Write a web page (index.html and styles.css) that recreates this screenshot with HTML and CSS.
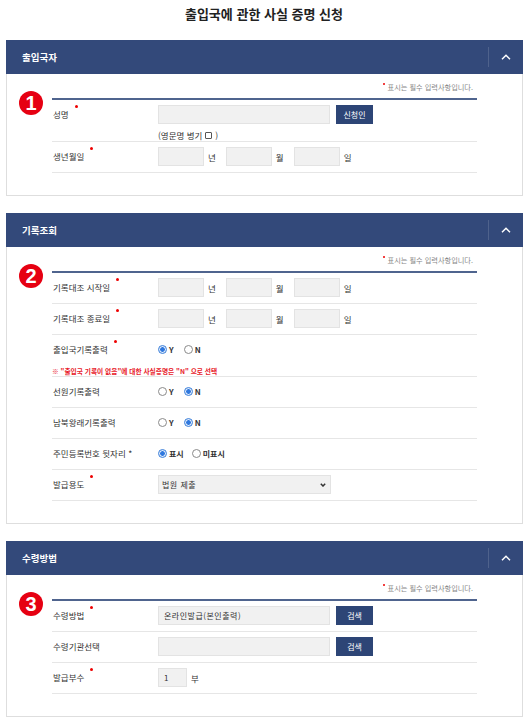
FILE: index.html
```html
<!DOCTYPE html>
<html lang="ko">
<head>
<meta charset="utf-8">
<title>출입국에 관한 사실 증명 신청</title>
<link rel="stylesheet" href="styles.css">
</head>
<body>
<h1 class="page-title">출입국에 관한 사실 증명 신청</h1>

<section class="panel">
  <header class="panel-head">
    <h2 class="panel-title">출입국자</h2>
    <span class="panel-toggle"><svg width="10" height="6" viewBox="0 0 10 6"><polyline points="1,5.3 5,1.2 9,5.3" fill="none" stroke="#fff" stroke-width="1.4"/></svg></span>
  </header>
  <div class="panel-body">
    <div class="step">1</div>
    <div class="panel-content">
      <p class="notice"><i class="dot"></i>표시는 필수 입력사항입니다.</p>
      <div class="form">
        <div class="row row-name">
          <div class="label">성명<i class="req"></i></div>
          <div class="field">
            <div class="line">
              <input class="box w-name" type="text">
              <button class="btn" type="button">신청인</button>
            </div>
            <div class="sub">(영문명 병기<span class="chk"></span>)</div>
          </div>
        </div>
        <div class="row">
          <div class="label">생년월일<i class="req"></i></div>
          <div class="field">
            <div class="line">
              <input class="box w-date" type="text"><span class="unit">년</span>
              <input class="box w-date" type="text"><span class="unit">월</span>
              <input class="box w-date" type="text"><span class="unit">일</span>
            </div>
          </div>
        </div>
      </div>
    </div>
  </div>
</section>

<section class="panel">
  <header class="panel-head">
    <h2 class="panel-title">기록조회</h2>
    <span class="panel-toggle"><svg width="10" height="6" viewBox="0 0 10 6"><polyline points="1,5.3 5,1.2 9,5.3" fill="none" stroke="#fff" stroke-width="1.4"/></svg></span>
  </header>
  <div class="panel-body">
    <div class="step">2</div>
    <div class="panel-content">
      <p class="notice"><i class="dot"></i>표시는 필수 입력사항입니다.</p>
      <div class="form">
        <div class="row">
          <div class="label">기록대조 시작일<i class="req"></i></div>
          <div class="field">
            <div class="line">
              <input class="box w-date" type="text"><span class="unit">년</span>
              <input class="box w-date" type="text"><span class="unit">월</span>
              <input class="box w-date" type="text"><span class="unit">일</span>
            </div>
          </div>
        </div>
        <div class="row">
          <div class="label">기록대조 종료일<i class="req"></i></div>
          <div class="field">
            <div class="line">
              <input class="box w-date" type="text"><span class="unit">년</span>
              <input class="box w-date" type="text"><span class="unit">월</span>
              <input class="box w-date" type="text"><span class="unit">일</span>
            </div>
          </div>
        </div>
        <div class="row row-wrap">
          <div class="label">출입국기록출력<i class="req"></i></div>
          <div class="field">
            <div class="line radios">
              <span class="opt"><span class="radio on"></span>Y</span>
              <span class="opt"><span class="radio"></span>N</span>
            </div>
          </div>
          <p class="warning">※ "출입국 기록이 없음"에 대한 사실증명은 "N" 으로 선택</p>
        </div>
        <div class="row">
          <div class="label">선원기록출력</div>
          <div class="field">
            <div class="line radios">
              <span class="opt"><span class="radio"></span>Y</span>
              <span class="opt"><span class="radio on"></span>N</span>
            </div>
          </div>
        </div>
        <div class="row">
          <div class="label">남북왕래기록출력</div>
          <div class="field">
            <div class="line radios">
              <span class="opt"><span class="radio"></span>Y</span>
              <span class="opt"><span class="radio on"></span>N</span>
            </div>
          </div>
        </div>
        <div class="row">
          <div class="label">주민등록번호 뒷자리 *</div>
          <div class="field">
            <div class="line radios radios-tight">
              <span class="opt"><span class="radio on"></span>표시</span>
              <span class="opt"><span class="radio"></span>미표시</span>
            </div>
          </div>
        </div>
        <div class="row">
          <div class="label">발급용도<i class="req"></i></div>
          <div class="field">
            <div class="line">
              <div class="select">
                <select class="box w-full">
                  <option>법원 제출</option>
                </select>
                <svg class="caret" width="6" height="4" viewBox="0 0 6 4"><polyline points="0.8,0.8 3,3 5.2,0.8" fill="none" stroke="#333" stroke-width="1.5"/></svg>
              </div>
            </div>
          </div>
        </div>
      </div>
    </div>
  </div>
</section>

<section class="panel">
  <header class="panel-head">
    <h2 class="panel-title">수령방법</h2>
    <span class="panel-toggle"><svg width="10" height="6" viewBox="0 0 10 6"><polyline points="1,5.3 5,1.2 9,5.3" fill="none" stroke="#fff" stroke-width="1.4"/></svg></span>
  </header>
  <div class="panel-body">
    <div class="step">3</div>
    <div class="panel-content">
      <p class="notice"><i class="dot"></i>표시는 필수 입력사항입니다.</p>
      <div class="form">
        <div class="row">
          <div class="label">수령방법<i class="req"></i></div>
          <div class="field">
            <div class="line">
              <input class="box w-name" type="text" value="온라인발급(본인출력)" readonly>
              <button class="btn" type="button">검색</button>
            </div>
          </div>
        </div>
        <div class="row">
          <div class="label">수령기관선택</div>
          <div class="field">
            <div class="line">
              <input class="box w-name" type="text" readonly>
              <button class="btn" type="button">검색</button>
            </div>
          </div>
        </div>
        <div class="row">
          <div class="label">발급부수<i class="req"></i></div>
          <div class="field">
            <div class="line">
              <input class="box w-num" type="text" value="1">
              <span class="unit">부</span>
            </div>
          </div>
        </div>
      </div>
    </div>
  </div>
</section>
</body>
</html>
```

FILE: styles.css
```css
* { box-sizing: border-box; }
html, body { margin: 0; padding: 0; background: #fff; }
body {
  font-family: "Noto Sans CJK KR", "Noto Sans", sans-serif;
  color: #333;
  font-size: 8.5px;
}
.page-title {
  margin: 0 0 19px;
  padding-top: 7px;
  font-size: 13px;
  line-height: 14px;
  font-weight: 700;
  text-align: center;
  color: #222;
}
.panel {
  margin: 0 5px 17px 6px;
  border: 1px solid #dedede;
}
.panel-head {
  margin: -1px -1px 0;
  height: 34px;
  background: #33497a;
  display: flex;
  align-items: center;
  padding-left: 16px;
}
.panel-title {
  flex: 1;
  margin: 0;
  font-size: 9.5px;
  font-weight: 700;
  color: #fff;
}
.panel-toggle {
  width: 35px;
  height: 20px;
  border-left: 1px solid rgba(255,255,255,0.14);
  display: flex;
  align-items: center;
  justify-content: center;
}
.panel-body {
  display: grid;
  grid-template-columns: 45px 1fr 45px;
  padding-bottom: 22px;
}
.step {
  margin: 17px 0 0 12px;
  width: 24px;
  height: 24px;
  border-radius: 50%;
  background: #e60012;
  color: #fff;
  font: 700 20px/24px "Liberation Sans", Arial, sans-serif;
  text-align: center;
}
.notice {
  margin: 0 0 6px;
  padding: 8px 4px 0 0;
  height: 18px;
  line-height: 10px;
  font-size: 7.2px;
  color: #888;
  text-align: right;
  white-space: nowrap;
}
.dot {
  display: inline-block;
  width: 2.5px;
  height: 2.5px;
  border-radius: 50%;
  background: #e00;
  margin-right: 2.5px;
  vertical-align: 5px;
}
.form { border-top: 2px solid #4f648e; }
.row {
  display: flex;
  padding: 5px 0 6px;
  border-bottom: 1px solid #e6e6e6;
}
.row-name { padding-bottom: 1px; }
.row-wrap { flex-wrap: wrap; padding-bottom: 0; }
.label {
  flex: none;
  width: 106px;
  height: 19px;
  padding-left: 1px;
  line-height: 19px;
  color: #333;
  white-space: nowrap;
}
.req {
  display: inline-block;
  width: 3px;
  height: 3px;
  border-radius: 50%;
  background: #e00;
  margin-left: 6px;
  vertical-align: 10px;
}
.field { flex: 1; }
.line {
  display: flex;
  align-items: center;
  height: 19px;
}
.box {
  height: 19px;
  border: 1px solid #e3e3e3;
  background: #f1f1f1;
  font: inherit;
  font-size: 8px;
  color: #333;
  padding: 0 5px;
  letter-spacing: 0.5px;
  outline: none;
  margin: 0;
}
.w-name { width: 172px; }
.w-date { width: 46px; }
.w-num { width: 29px; }
.w-full { width: 100%; }
.unit { margin: 0 10px 0 4px; }
.btn {
  margin-left: 6px;
  width: 37px;
  height: 19px;
  padding: 0;
  border: 0;
  background: #2d4576;
  color: #fff;
  font: inherit;
  font-size: 8px;
}
.sub {
  display: flex;
  align-items: center;
  margin-top: 6px;
  height: 10px;
  line-height: 10px;
}
.chk {
  display: inline-block;
  width: 7px;
  height: 7px;
  border: 1px solid #555;
  border-radius: 1px;
  margin: 0 3px;
}
.warning {
  width: 100%;
  margin: 8px 0 0;
  height: 9px;
  line-height: 9px;
  font-size: 6.7px;
  font-weight: 700;
  color: #e8202a;
  white-space: nowrap;
}
.radios { gap: 10px; }
.radios-tight { gap: 8px; }
.opt {
  display: flex;
  align-items: center;
  gap: 2px;
  font-weight: 700;
  font-size: 8px;
  color: #333;
}
.radio {
  width: 9px;
  height: 9px;
  border-radius: 50%;
  border: 1px solid #8a8a8a;
  background: #fff;
}
.radio.on {
  border-color: #3b7fd9;
  background: radial-gradient(circle, #2f78de 0 2px, #dce9fb 2.6px);
}
.select {
  position: relative;
  width: 173px;
  height: 19px;
}
.select select {
  appearance: none;
  -webkit-appearance: none;
  padding-left: 3px;
}
.caret {
  position: absolute;
  right: 5px;
  top: 8px;
}
```
